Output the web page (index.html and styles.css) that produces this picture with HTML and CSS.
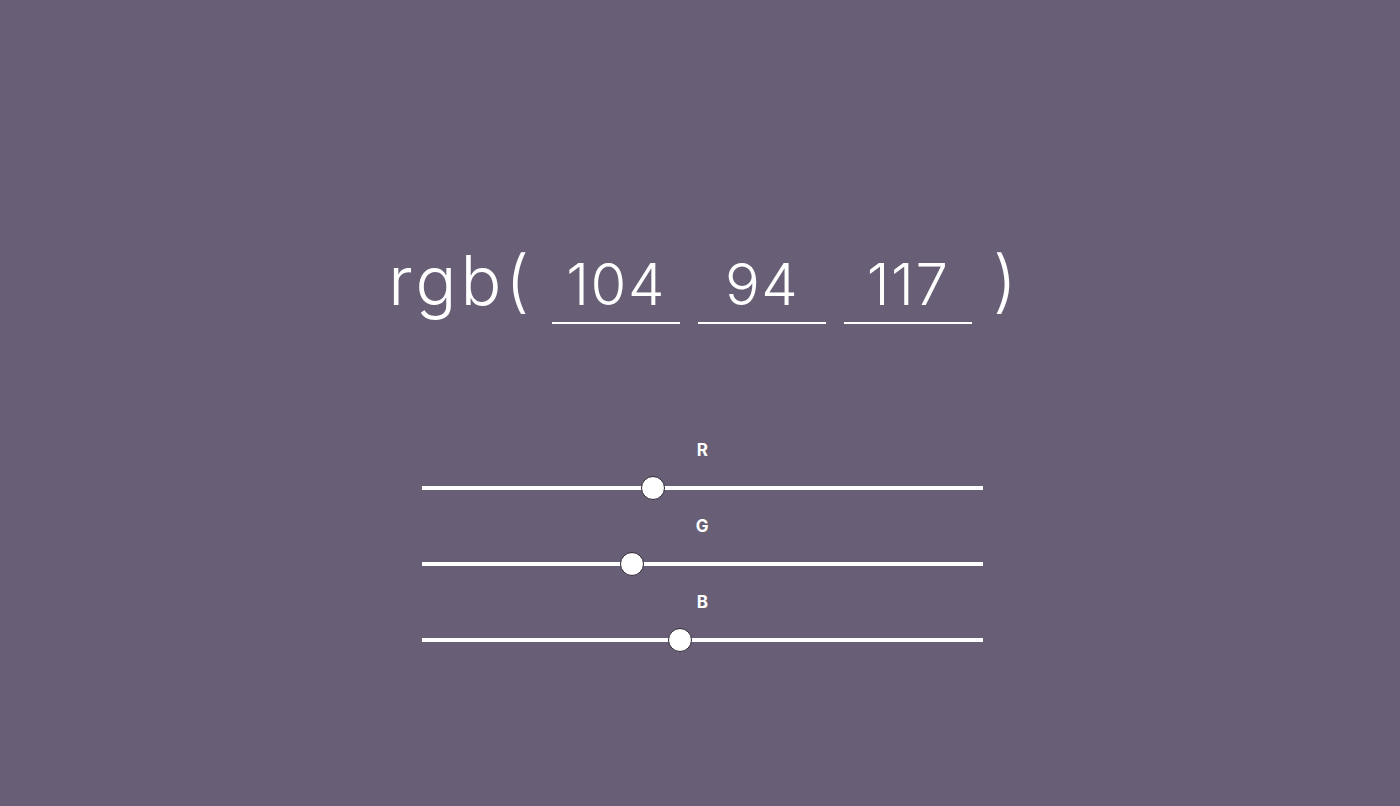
FILE: index.html
```html
<!DOCTYPE html>
<html lang="en">
<head>
<meta charset="utf-8">
<title>RGB</title>
<link rel="stylesheet" href="styles.css">
</head>
<body>
<main class="app">
  <div class="rgb-row">
    <span class="paren">rgb(</span>
    <input class="num" type="text" value="104">
    <input class="num" type="text" value="94">
    <input class="num" type="text" value="117">
    <span class="paren close">)</span>
  </div>
  <div class="sliders">
    <div class="group">
      <label class="lbl">R</label>
      <input class="range" type="range" min="0" max="255" value="104">
    </div>
    <div class="group">
      <label class="lbl">G</label>
      <input class="range" type="range" min="0" max="255" value="94">
    </div>
    <div class="group">
      <label class="lbl">B</label>
      <input class="range" type="range" min="0" max="255" value="117">
    </div>
  </div>
</main>
</body>
</html>
```
FILE: styles.css
```css
html, body {
  margin: 0;
  padding: 0;
  height: 100%;
}
body {
  background: #685e75;
  color: #ffffff;
  font-family: "Inter", "DejaVu Sans", sans-serif;
  overflow: hidden;
}
.app {
  display: flex;
  flex-direction: column;
  align-items: center;
  padding-top: 240px;
  padding-left: 5px;
}
.rgb-row {
  display: flex;
  align-items: baseline;
  font-weight: 300;
  gap: 18px;
}
.paren {
  display: block;
  font-size: 68px;
  line-height: 80px;
  letter-spacing: 4px;
  margin-right: 1px;
}
.paren.close {
  margin-left: 3px;
  margin-right: 0;
  letter-spacing: 0;
}
.num {
  width: 128px;
  box-sizing: border-box;
  background: transparent;
  border: none;
  border-bottom: 2px solid #ffffff;
  color: #ffffff;
  font-family: inherit;
  font-weight: 300;
  font-size: 58px;
  letter-spacing: 1.5px;
  line-height: 70px;
  height: 75px;
  text-align: center;
  padding: 0 0 3px 0;
  outline: none;
}
.sliders {
  display: flex;
  flex-direction: column;
  gap: 16px;
  margin-top: 116px;
}
.group {
  display: flex;
  flex-direction: column;
  align-items: center;
  gap: 16px;
}
.lbl {
  display: block;
  font-family: "Inter", "DejaVu Sans", sans-serif;
  font-weight: 700;
  font-size: 17px;
  line-height: 20px;
  letter-spacing: 0.5px;
}
.range {
  -webkit-appearance: none;
  appearance: none;
  width: 561px;
  height: 24px;
  margin: 0;
  background: transparent;
}
.range::-webkit-slider-runnable-track {
  height: 4px;
  background: #ffffff;
}
.range::-webkit-slider-thumb {
  -webkit-appearance: none;
  appearance: none;
  width: 24px;
  height: 24px;
  border-radius: 50%;
  background: #ffffff;
  border: 1.5px solid #2a2530;
  box-sizing: border-box;
  margin-top: -10px;
}
```
